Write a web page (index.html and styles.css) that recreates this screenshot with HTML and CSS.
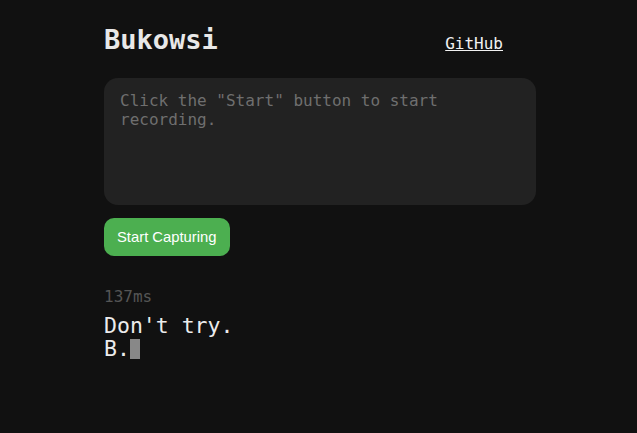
FILE: index.html
```html
<!DOCTYPE html>
<html lang="en">
<head>
<meta charset="utf-8">
<title>Bukowsi</title>
<link rel="stylesheet" href="styles.css">
</head>
<body>
<main class="app">
  <header class="header">
    <h1 class="title">Bukowsi</h1>
    <a class="github" href="#">GitHub</a>
  </header>
  <textarea class="input" placeholder="Click the &quot;Start&quot; button to start recording."></textarea>
  <button class="start">Start Capturing</button>
  <section class="output">
    <div class="timing">137ms</div>
    <div class="text">Don't try.<br>B.<span class="cursor"></span></div>
  </section>
</main>
</body>
</html>
```
FILE: styles.css
```css
html, body {
  margin: 0;
  padding: 0;
  background: #111111;
  color: #e6e6e6;
  font-family: "DejaVu Sans Mono", monospace;
  font-size: 16px;
}

.app {
  width: 432px;
  margin: 0 0 0 104px;
  padding-top: 24px;
  display: flex;
  flex-direction: column;
  align-items: flex-start;
}

.header {
  width: 100%;
  box-sizing: border-box;
  display: flex;
  justify-content: space-between;
  align-items: baseline;
  padding-right: 33px;
}

.title {
  margin: 0;
  font-size: 27px;
  font-weight: bold;
  color: #e8e8e8;
  line-height: 32px;
}

.github {
  color: #f2f2f2;
  text-decoration: underline;
  font-size: 16px;
}

.input {
  display: block;
  width: 100%;
  height: 127px;
  box-sizing: border-box;
  margin-top: 22px;
  padding: 14px 16px 12px;
  background: #222222;
  border: none;
  border-radius: 14px;
  color: #e6e6e6;
  font-family: "DejaVu Sans Mono", monospace;
  font-size: 16px;
  line-height: 18.6px;
  resize: none;
  outline: none;
}

.input::placeholder {
  color: #6f6f6f;
}

.start {
  margin-top: 13px;
  height: 38px;
  padding: 0 13px 1px;
  background: #4caf50;
  color: #ffffff;
  border: none;
  border-radius: 10px;
  font-family: "Liberation Sans", Arial, sans-serif;
  font-size: 14.8px;
}

.output {
  margin-top: 31px;
}

.timing {
  color: #555555;
  font-size: 16px;
  line-height: 19px;
}

.text {
  margin-top: 8px;
  font-size: 21.5px;
  line-height: 23px;
  color: #ececec;
}

.cursor {
  display: inline-block;
  width: 10px;
  height: 20px;
  background: #888888;
  vertical-align: -3px;
}
```
